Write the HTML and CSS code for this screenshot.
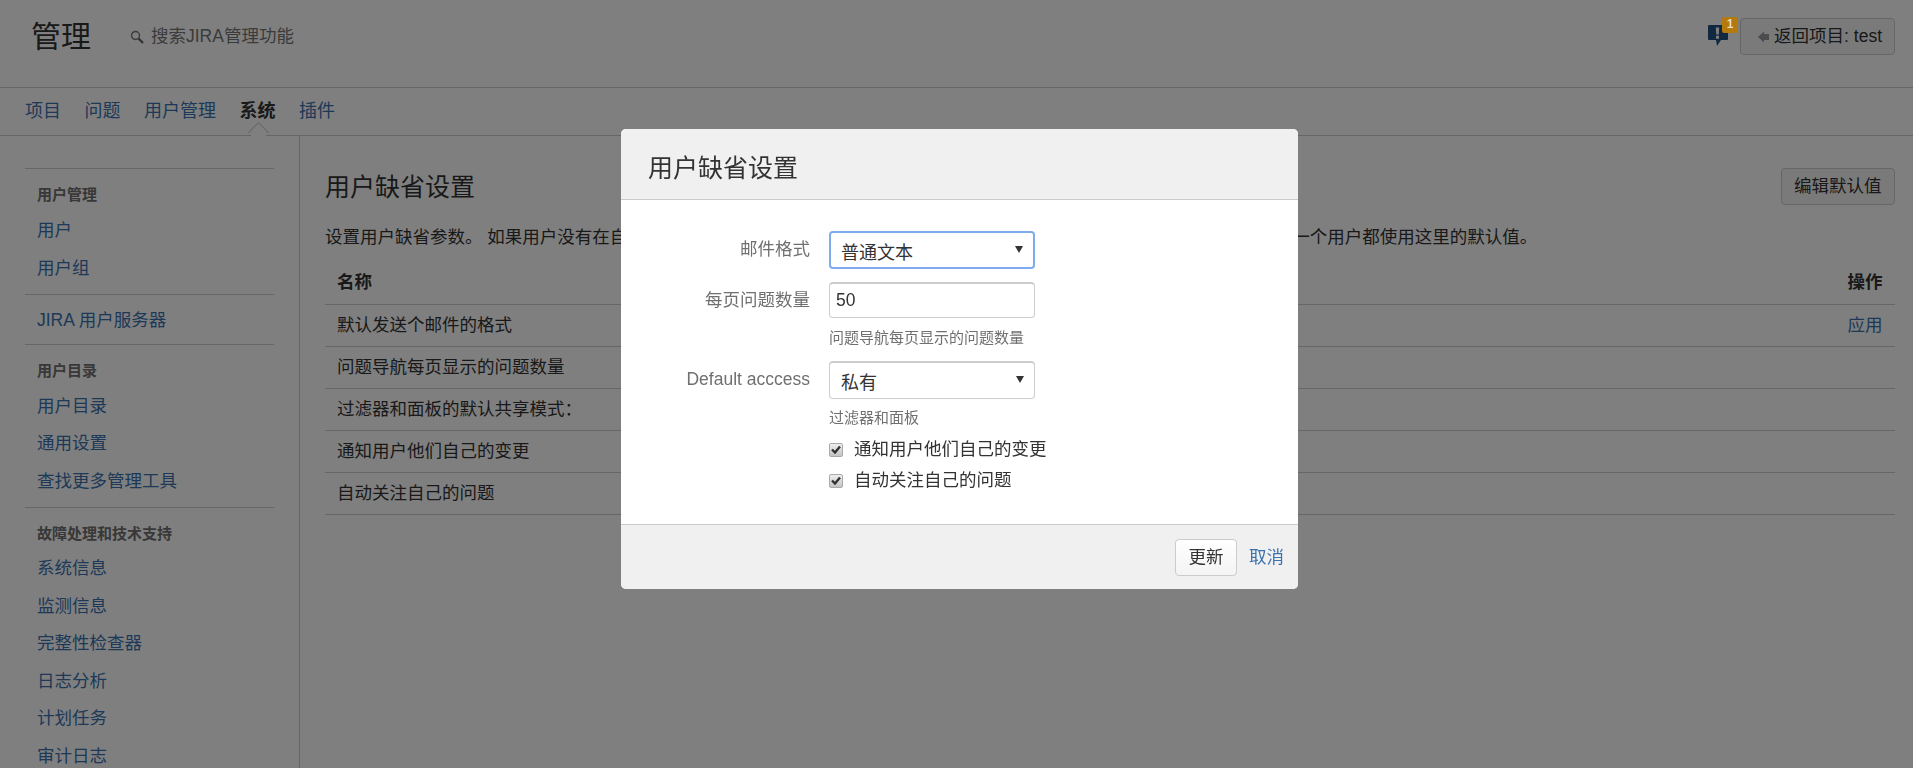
FILE: index.html
```html
<!DOCTYPE html>
<html lang="zh-CN">
<head>
<meta charset="utf-8">
<title>用户缺省设置</title>
<link rel="stylesheet" href="styles.css">
</head>
<body>
<header class="top">
  <h1 class="top-title">管理</h1>
  <div class="search">
    <svg class="search-icon" viewBox="0 0 14 14" width="14" height="14"><circle cx="5.500" cy="5.500" r="4" fill="none" stroke="#777" stroke-width="1.400"/><path d="M8.500 8.500L13 13" stroke="#666" stroke-width="2.400"/></svg>
    <span>搜索JIRA管理功能</span>
  </div>
  <div class="top-right">
    <div class="notice">
      <svg class="notice-icon" viewBox="0 0 20 21" width="20" height="21"><path d="M1 0h18a1 1 0 0 1 1 1v13a1 1 0 0 1-1 1h-6l-4 6-1-6H1a1 1 0 0 1-1-1V1a1 1 0 0 1 1-1z" fill="#205081"/><path d="M7.800 2.500h3.400l-.5 7H8.300zM8 10.800h3v3H8z" fill="#fff"/></svg>
      <span class="notice-badge">1</span>
    </div>
    <a class="btn btn-back"><svg class="back-icon" viewBox="0 0 12 12" width="12" height="12"><path d="M0 6l6-5.500V3h5v6H6v2.500z" fill="#999"/></svg>返回项目: test</a>
  </div>
</header>
<nav class="tabs">
  <a class="tab">项目</a>
  <a class="tab">问题</a>
  <a class="tab">用户管理</a>
  <a class="tab tab-active">系统</a>
  <a class="tab">插件</a>
</nav>
<div class="main">
  <aside class="side">
    <section class="side-sec">
      <h4 class="side-head">用户管理</h4>
      <a class="side-link">用户</a>
      <a class="side-link">用户组</a>
    </section>
    <section class="side-sec side-sec-plain">
      <a class="side-link">JIRA 用户服务器</a>
    </section>
    <section class="side-sec side-sec-tight">
      <h4 class="side-head">用户目录</h4>
      <a class="side-link">用户目录</a>
      <a class="side-link">通用设置</a>
      <a class="side-link">查找更多管理工具</a>
    </section>
    <section class="side-sec">
      <h4 class="side-head side-head-close">故障处理和技术支持</h4>
      <a class="side-link">系统信息</a>
      <a class="side-link">监测信息</a>
      <a class="side-link">完整性检查器</a>
      <a class="side-link">日志分析</a>
      <a class="side-link">计划任务</a>
      <a class="side-link">审计日志</a>
    </section>
  </aside>
  <main class="content">
    <div class="content-head">
      <h2 class="content-title">用户缺省设置</h2>
      <a class="btn btn-edit">编辑默认值</a>
    </div>
    <p class="desc">设置用户缺省参数。 如果用户没有在自己的个人资料页面中明确地设置过这些偏好参数，那么系统将默认应用下列设置，即每一个用户都使用这里的默认值。</p>
    <table class="prefs">
      <thead><tr><th>名称</th><th class="col-op">操作</th></tr></thead>
      <tbody>
        <tr><td>默认发送个邮件的格式</td><td class="col-op"><a class="link">应用</a></td></tr>
        <tr><td>问题导航每页显示的问题数量</td><td></td></tr>
        <tr><td>过滤器和面板的默认共享模式<span class="colon">：</span></td><td></td></tr>
        <tr><td>通知用户他们自己的变更</td><td></td></tr>
        <tr><td>自动关注自己的问题</td><td></td></tr>
      </tbody>
    </table>
  </main>
</div>
<div class="overlay"></div>
<div class="modal">
  <div class="modal-head"><h2 class="modal-title">用户缺省设置</h2></div>
  <form class="modal-body">
    <div class="field field-gap">
      <label class="field-label">邮件格式</label>
      <div class="field-ctl">
        <div class="sel sel-focus"><span class="sel-text">普通文本</span><i class="sel-arrow"></i></div>
      </div>
    </div>
    <div class="field field-gap">
      <label class="field-label">每页问题数量</label>
      <div class="field-ctl">
        <input class="txt" type="text" value="50">
        <div class="help">问题导航每页显示的问题数量</div>
      </div>
    </div>
    <div class="field">
      <label class="field-label">Default acccess</label>
      <div class="field-ctl">
        <div class="sel"><span class="sel-text">私有</span><i class="sel-arrow"></i></div>
        <div class="help help-tight">过滤器和面板</div>
      </div>
    </div>
    <div class="checks">
      <label class="check"><span class="check-box"><svg viewBox="0 0 10 9" width="10" height="9"><path d="M1 4.500l3 3L9 1.500" fill="none" stroke="#333" stroke-width="2.400"/></svg></span><span class="check-text">通知用户他们自己的变更</span></label>
      <label class="check"><span class="check-box"><svg viewBox="0 0 10 9" width="10" height="9"><path d="M1 4.500l3 3L9 1.500" fill="none" stroke="#333" stroke-width="2.400"/></svg></span><span class="check-text">自动关注自己的问题</span></label>
    </div>
  </form>
  <div class="modal-foot">
    <a class="btn btn-light">更新</a>
    <a class="link">取消</a>
  </div>
</div>
</body>
</html>
```
FILE: styles.css
```css
* { box-sizing: border-box; }
html, body { height: 100%; }
body {
  margin: 0;
  height: 768px;
  overflow: hidden;
  background: #fff;
  color: #333;
  font: 17.500px/25px "Liberation Sans", "Noto Sans CJK SC", sans-serif;
}
h1, h2, h4, p { margin: 0; font-weight: normal; }

.top {
  display: flex;
  height: 88px;
  padding: 18px 18px 0 31px;
  border-bottom: 1px solid #ccc;
}
.top-title { font-size: 30px; line-height: 38px; }
.search {
  display: flex;
  align-items: center;
  gap: 7px;
  height: 36px;
  margin-left: 39px;
  color: #777;
}
.search-icon { margin-top: 1px; }
.top-right { display: flex; margin-left: auto; align-items: flex-start; }
.notice { position: relative; width: 32px; height: 37px; }
.notice-icon { position: absolute; left: 0; top: 7px; }
.notice-badge {
  position: absolute;
  left: 14px;
  top: -1px;
  z-index: 20;
  width: 16px;
  height: 16px;
  border-radius: 2px;
  background: #b47a0c;
  color: #eadbbb;
  font-size: 12px;
  font-weight: bold;
  line-height: 15px;
  text-align: center;
}
.btn {
  display: inline-flex;
  align-items: center;
  height: 37px;
  padding: 0 14px;
  border: 1px solid #ccc;
  border-radius: 4px;
  background: #f5f5f5;
  color: #333;
  white-space: nowrap;
}
.btn-back { padding: 0 12px 0 17px; }
.btn-edit { padding: 0 12.500px; }
.back-icon { margin-right: 4px; }
.btn-light { justify-content: center; width: 62px; padding: 0; background: linear-gradient(#fff, #f4f4f4); }

.tabs {
  position: relative;
  display: flex;
  gap: 23.500px;
  height: 48px;
  padding-left: 25px;
  border-bottom: 1px solid #ccc;
  font-size: 18px;
  line-height: 46px;
}
.tab { color: #3b73af; }
.tab-active { position: relative; color: #333; font-weight: bold; }
.tab-active::after {
  content: "";
  position: absolute;
  left: 50%;
  bottom: -5px;
  width: 14px;
  height: 14px;
  margin-left: -7px;
  border-left: 1px solid #ccc;
  border-top: 1px solid #ccc;
  background: #fff;
  transform: rotate(45deg);
}

.main { display: flex; height: 632px; }
.side {
  flex: none;
  width: 300px;
  padding: 32px 25px 0;
  border-right: 1px solid #ccc;
  overflow: hidden;
}
.side-sec { padding: 16px 0 8px; border-top: 1px solid #ccc; }
.side-sec-plain { padding: 6px 0 5px; }
.side-sec-tight { padding-bottom: 7.500px; }
.side-head {
  padding-left: 12px;
  margin-bottom: 6px;
  color: #707070;
  font-size: 15px;
  font-weight: bold;
  line-height: 20px;
}
.side-head-close { margin-bottom: 5px; }
.side-link {
  display: block;
  padding: 1px 0 0 12px;
  color: #3b73af;
  line-height: 37.600px;
  height: 37.600px;
}

.content { flex: 1; min-width: 0; padding: 32px 18px 0 25px; }
.content-head { display: flex; justify-content: space-between; align-items: center; }
.content-title { padding-top: 1px; font-size: 25px; line-height: 36px; }
.desc { margin-top: 19px; line-height: 26px; white-space: nowrap; }
.prefs { width: 100%; margin-top: 12px; border-collapse: collapse; }
.prefs th, .prefs td {
  height: 42px;
  padding: 0 12px;
  border-bottom: 1px solid #ccc;
  text-align: left;
}
.prefs th { font-weight: bold; }
.prefs .col-op { padding-right: 12.500px; text-align: right; }
.colon { font-family: "Noto Sans CJK TC", sans-serif; line-height: 0; }
.link { color: #3b73af; }

.overlay {
  position: fixed;
  inset: 0;
  z-index: 10;
  background: rgba(0, 0, 0, .5);
}
.modal {
  position: fixed;
  left: 621px;
  top: 129px;
  z-index: 30;
  display: flex;
  flex-direction: column;
  width: 677px;
  height: 460px;
  border-radius: 5px;
  background: #fff;
  overflow: hidden;
}
.modal-head {
  flex: none;
  height: 71px;
  padding: 21px 27px 0;
  border-bottom: 1px solid #ccc;
  background: #f0f0f0;
}
.modal-title { font-size: 25px; line-height: 36px; }
.modal-body { flex: 1; padding-top: 31px; }
.field { display: grid; grid-template-columns: 189px 206px; column-gap: 19px; }
.field-gap { margin-bottom: 13px; }
.field-label { color: #707070; line-height: 36px; text-align: right; }
.sel {
  position: relative;
  height: 38px;
  padding: 4px 0 0 11px;
  border: 1px solid #ccc;
  border-top-width: 2px;
  border-radius: 4px;
  background: #fff;
  font-size: 18px;
  line-height: 33px;
  color: #333;
}
.sel-focus { border: 2px solid #7faaf0; padding-left: 10px; padding-top: 4px; line-height: 33px; }
.sel-arrow {
  position: absolute;
  right: 10px;
  top: 13px;
  width: 0;
  height: 0;
  border-left: 4px solid transparent;
  border-right: 4px solid transparent;
  border-top: 7px solid #333;
}
.txt {
  display: block;
  width: 206px;
  height: 36px;
  padding: 0 6px;
  border: 1px solid #ccc;
  border-top-width: 2px;
  border-radius: 4px;
  outline: none;
  background: #fff;
  color: #333;
  font: 17.500px "Liberation Sans", sans-serif;
}
.help { margin-top: 10px; color: #707070; font-size: 15px; line-height: 20px; }
.help-tight { margin-top: 9px; }
.checks { margin: 6px 0 0 208px; }
.check { display: flex; align-items: center; height: 31px; }
.check-box {
  display: flex;
  align-items: center;
  justify-content: center;
  width: 14px;
  height: 14px;
  margin-right: 11px;
  border: 1px solid #aaa;
  border-radius: 2px;
  background: linear-gradient(#eee, #c4c4c4);
}
.modal-foot {
  flex: none;
  display: flex;
  align-items: center;
  justify-content: flex-end;
  gap: 12px;
  height: 65px;
  padding: 0 14px 0 0;
  border-top: 1px solid #ccc;
  background: #f0f0f0;
}
```
